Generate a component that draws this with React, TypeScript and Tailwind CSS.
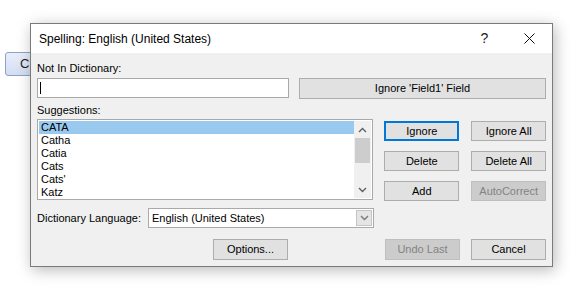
import React from 'react';

const font = { fontFamily: '"Liberation Sans", "Segoe UI", Arial, sans-serif' };

const suggestions = ['CATA', 'Catha', 'Catia', 'Cats', "Cats'", 'Katz'];

function WinButton({
  children,
  w = 'w-[75px]',
  h = 'h-[20px]',
  focused = false,
  disabled = false,
}: {
  children: React.ReactNode;
  w?: string;
  h?: string;
  focused?: boolean;
  disabled?: boolean;
}) {
  let look = 'bg-[#e1e1e1] border border-[#adadad] text-black';
  if (focused) look = 'bg-[#e1e1e1] border-2 border-[#0078d7] text-black';
  if (disabled) look = 'bg-[#cccccc] border border-[#bfbfbf] text-[#838383]';
  return (
    <div className={`${w} ${h} ${look} flex items-center justify-center text-[11px] leading-none whitespace-nowrap shrink-0`}>
      {children}
    </div>
  );
}

function Chevron({ up = false, color = '#606060' }: { up?: boolean; color?: string }) {
  return (
    <svg width="9" height="6" viewBox="0 0 9 6">
      <path
        d={up ? 'M1 5 L4.5 1.5 L8 5' : 'M1 1 L4.5 4.5 L8 1'}
        fill="none"
        stroke={color}
        strokeWidth="1.4"
      />
    </svg>
  );
}

export default function App() {
  return (
    <div className="relative w-[573px] h-[301px] bg-white overflow-hidden" style={font}>
      {/* button of the window behind */}
      <div className="absolute left-[5px] top-[52px] w-[45px] h-[24px] rounded-[3px] border border-[#8ea2c8] bg-gradient-to-b from-[#e9eefa] to-[#d3ddf2] flex items-center pl-[14px] text-[13px] text-[#1e1e1e]">
        C
      </div>

      {/* dialog */}
      <div className="absolute left-[30px] top-[23px] w-[523px] h-[244px] border border-[#7a7a7a] bg-[#f0f0f0] shadow-[2px_3px_14px_rgba(0,0,0,0.28)] flex flex-col text-black">
        {/* title bar */}
        <div className="h-[29px] bg-white flex items-center shrink-0">
          <div className="pl-[8px] text-[12px] flex-1 whitespace-nowrap">Spelling: English (United States)</div>
          <div className="w-[45px] h-full flex items-center justify-center text-[14px] text-[#1a1a1a]">?</div>
          <div className="w-[45px] h-full flex items-center justify-center">
            <svg width="11" height="11" viewBox="0 0 11 11">
              <path d="M0.5 0.5 L10.5 10.5 M10.5 0.5 L0.5 10.5" stroke="#111" strokeWidth="1" />
            </svg>
          </div>
        </div>

        {/* body */}
        <div className="flex flex-col px-[6px] text-[11px] whitespace-nowrap">
          <div className="pt-[7px] leading-[16px]">Not In Dictionary:</div>
          <div className="mt-[2px] flex items-start gap-[10px]">
            <div className="w-[252px] h-[20px] bg-white border border-[#a9a9a9] flex items-center pl-[2px]">
              <div className="w-px h-[12px] bg-black" />
            </div>
            <WinButton w="flex-1" h="h-[21px]">Ignore 'Field1' Field</WinButton>
          </div>

          <div className="mt-[3px] leading-[16px]">Suggestions:</div>
          <div className="mt-[1px] flex items-start">
            <div className="w-[337px] h-[81px] bg-white border border-[#a9a9a9] flex p-px">
              <div className="flex-1 flex flex-col">
                {suggestions.map((s, i) => (
                  <div
                    key={s}
                    className={`h-[13px] leading-[13px] pl-[2px] ${i === 0 ? 'bg-[#99c9ef]' : ''}`}
                  >
                    {s}
                  </div>
                ))}
              </div>
              <div className="w-[17px] bg-[#f0f0f0] flex flex-col">
                <div className="h-[17px] flex items-center justify-center">
                  <Chevron up />
                </div>
                <div className="mx-[1px] h-[25px] bg-[#cdcdcd]" />
                <div className="flex-1" />
                <div className="h-[17px] flex items-center justify-center">
                  <Chevron />
                </div>
              </div>
            </div>
            <div className="ml-[11px] mt-[2px] grid grid-cols-2 gap-x-[12px] gap-y-[10px]">
              <WinButton focused>Ignore</WinButton>
              <WinButton>Ignore All</WinButton>
              <WinButton>Delete</WinButton>
              <WinButton>Delete All</WinButton>
              <WinButton>Add</WinButton>
              <WinButton disabled>AutoCorrect</WinButton>
            </div>
          </div>

          <div className="mt-[7px] flex items-center">
            <div className="w-[111px]">Dictionary Language:</div>
            <div className="w-[226px] h-[20px] bg-white border border-[#a9a9a9] flex items-center">
              <div className="flex-1 pl-[3px]">English (United States)</div>
              <div className="w-[16px] h-[16px] mr-px bg-[#e5e5e5] border border-[#c4c4c4] flex items-center justify-center">
                <Chevron color="#7a7a7a" />
              </div>
            </div>
          </div>

          <div className="mt-[11px] flex items-center">
            <div className="ml-[176px]">
              <WinButton h="h-[21px]">Options...</WinButton>
            </div>
            <div className="ml-[97px]">
              <WinButton h="h-[21px]" disabled>Undo Last</WinButton>
            </div>
            <div className="ml-[11px]">
              <WinButton h="h-[21px]">Cancel</WinButton>
            </div>
          </div>
        </div>
      </div>
    </div>
  );
}
